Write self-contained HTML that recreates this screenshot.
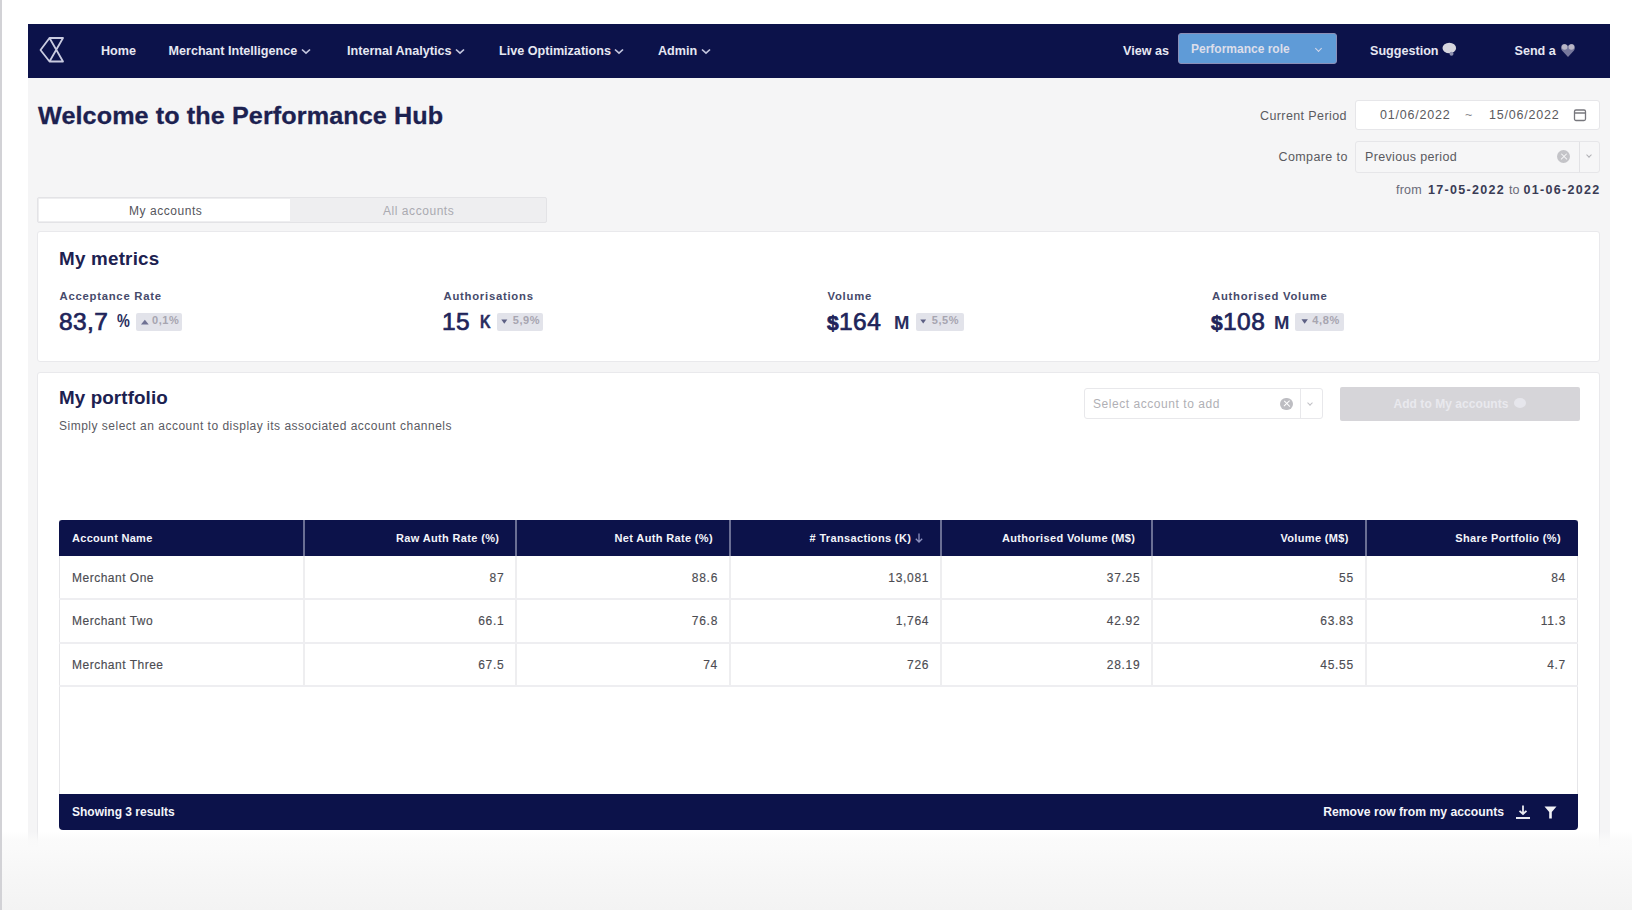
<!DOCTYPE html>
<html><head><meta charset="utf-8">
<style>
*{box-sizing:border-box;margin:0;padding:0}
html,body{width:1632px;height:910px;overflow:hidden;background:#fff;font-family:"Liberation Sans",sans-serif;position:relative}
.a{position:absolute;white-space:nowrap}
#strip{left:0;top:0;width:2px;height:910px;background:#d2d2d6}
#nav{left:28px;top:23.5px;width:1582px;height:54.5px;background:#0c124a}
#content{left:28px;top:78px;width:1582px;height:769px;background:#f5f5f6}
#fade{left:2px;top:831px;width:1630px;height:79px;background:linear-gradient(to bottom,rgba(250,250,250,0) 0px,rgba(250,250,250,0.9) 10px,#fafafa 17px,#f6f6f6 50px,#f3f3f3 79px)}
.nv{color:#e6e7f2;font-weight:bold;font-size:12.6px;top:44px}
.chev{display:inline-block;width:10px;height:7px;margin-left:3.5px;vertical-align:0px}
.card{background:#fff;border:1px solid #e9e9ec;border-radius:3px}
.lbl{color:#464a6b;font-weight:bold;font-size:11.3px;letter-spacing:0.75px}
.num{color:#20245a;font-size:24.5px;letter-spacing:0.4px;-webkit-text-stroke:0.7px #20245a}
.unit{color:#2a2e5e;font-weight:bold}
.badge{background:#e2e3ea;border-radius:2px;height:18px}
.bt{color:#a7a5b0;font-size:11px;font-weight:bold;letter-spacing:0.6px;top:314px}
.th{color:#f4f5fa;font-weight:bold;font-size:11px;top:532px}
.td{color:#4c4c52;font-size:12px;-webkit-text-stroke:0.15px #4c4c52}
</style></head><body><div id="root" style="position:absolute;left:0;top:0;width:1632px;height:910px">
<div id="strip" class="a"></div>
<div id="nav" class="a"></div>
<div id="content" class="a"></div>

<!-- logo -->
<svg class="a" style="left:38px;top:34px" width="30" height="32" viewBox="0 0 30 32">
<path d="M11.5 4 L25 4 L11.5 27.5 L25 27.5 Z M11.5 4 L2.5 16 L11.5 27.5" fill="none" stroke="#c9cbe0" stroke-width="1.8" stroke-linejoin="round"/>
</svg>

<div class="a nv" style="left:101px">Home</div>
<div class="a nv" style="left:168.5px">Merchant Intelligence<svg class="chev" width="10" height="7" viewBox="0 0 10 7"><path d="M1 1.5 L5 5.2 L9 1.5" fill="none" stroke="#c3c6de" stroke-width="1.7"/></svg></div>
<div class="a nv" style="left:347px">Internal Analytics<svg class="chev" width="10" height="7" viewBox="0 0 10 7"><path d="M1 1.5 L5 5.2 L9 1.5" fill="none" stroke="#c3c6de" stroke-width="1.7"/></svg></div>
<div class="a nv" style="left:499px">Live Optimizations<svg class="chev" width="10" height="7" viewBox="0 0 10 7"><path d="M1 1.5 L5 5.2 L9 1.5" fill="none" stroke="#c3c6de" stroke-width="1.7"/></svg></div>
<div class="a nv" style="left:658px">Admin<svg class="chev" width="10" height="7" viewBox="0 0 10 7"><path d="M1 1.5 L5 5.2 L9 1.5" fill="none" stroke="#c3c6de" stroke-width="1.7"/></svg></div>

<div class="a nv" style="left:1123px">View as</div>
<div class="a" style="left:1178px;top:33px;width:159px;height:31px;background:#5f9bd7;border:1px solid #8a8fb8;border-radius:3px"></div>
<div class="a" style="left:1191px;top:41.5px;color:#dcdeea;font-size:12px;font-weight:bold;letter-spacing:0px">Performance role</div>
<div class="a" style="left:1316px;top:46px;width:5px;height:5px;border-right:1px solid #d5d8ea;border-bottom:1px solid #d5d8ea;transform:rotate(45deg)"></div>
<div class="a nv" style="left:1370px">Suggestion</div>
<div class="a nv" style="left:1514.5px">Send a</div>


<svg class="a" style="left:1440px;top:41px" width="18" height="17" viewBox="0 0 18 17"><ellipse cx="9.3" cy="7" rx="6.8" ry="5.2" fill="#d6d6de"/><ellipse cx="11.5" cy="12.8" rx="2" ry="2" fill="#8e90b0"/></svg>
<svg class="a" style="left:1560px;top:41.5px" width="16" height="16" viewBox="0 0 16 16"><path d="M8 15 L2 8.5 C0.2 6.3 1 2 4.3 2 C6 2 7.2 3 8 4.2 C8.8 3 10 2 11.7 2 C15 2 15.8 6.3 14 8.5 Z" fill="#77789c"/><circle cx="4.6" cy="5" r="2.8" fill="#b9b6c6"/><circle cx="11.4" cy="5" r="2.8" fill="#b9b6c6"/></svg>
<!-- header -->
<div class="a" style="left:38px;top:102px;color:#1c2150;font-size:24px;font-weight:bold;letter-spacing:0.1px;transform:scaleX(1.048);transform-origin:left;-webkit-text-stroke:0.3px #1c2150">Welcome to the Performance Hub</div>

<div class="a" style="left:1260px;top:109px;color:#5a5a60;font-size:12.5px;letter-spacing:0.4px">Current Period</div>
<div class="a" style="left:1355px;top:100px;width:245px;height:30px;background:#fff;border:1px solid #e6e6e9;border-radius:3px"></div>
<div class="a" style="left:1380px;top:108px;color:#5a5a60;font-size:12.5px;letter-spacing:0.8px">01/06/2022</div>
<div class="a" style="left:1465px;top:108px;color:#8a8a90;font-size:12.5px">~</div>
<div class="a" style="left:1489px;top:108px;color:#5a5a60;font-size:12.5px;letter-spacing:0.8px">15/06/2022</div>
<svg class="a" style="left:1573px;top:108px" width="14" height="14" viewBox="0 0 14 14"><rect x="1.5" y="2" width="11" height="10.5" rx="1.5" fill="none" stroke="#77777d" stroke-width="1.3"/><line x1="1.5" y1="5" x2="12.5" y2="5" stroke="#77777d" stroke-width="1.5"/></svg>

<div class="a" style="left:1278.5px;top:150px;color:#5a5a60;font-size:12.5px;letter-spacing:0.4px">Compare to</div>
<div class="a" style="left:1355px;top:141px;width:245px;height:32px;background:#f6f6f7;border:1px solid #e6e6e9;border-radius:3px"></div>
<div class="a" style="left:1579px;top:142px;width:1px;height:30px;background:#e2e2e5"></div>
<div class="a" style="left:1365px;top:150px;color:#5a5a60;font-size:12.5px;letter-spacing:0.35px">Previous period</div>
<div class="a" style="left:1557px;top:150px;width:13px;height:13px;border-radius:50%;background:#c4c4c8"></div>
<div class="a" style="left:1559.5px;top:155.8px;width:8px;height:1.4px;background:#f6f6f7;transform:rotate(45deg)"></div>
<div class="a" style="left:1559.5px;top:155.8px;width:8px;height:1.4px;background:#f6f6f7;transform:rotate(-45deg)"></div>
<div class="a" style="left:1587px;top:153px;width:4px;height:4px;border-right:1px solid #b0b0b5;border-bottom:1px solid #b0b0b5;transform:rotate(45deg)"></div>

<div class="a" style="left:1396px;top:182.5px;color:#6a6a78;font-size:12.5px;letter-spacing:0.2px">from</div>
<div class="a" style="left:1428px;top:182.5px;color:#3a3c55;font-size:12.5px;font-weight:bold;letter-spacing:1.3px">17-05-2022</div>
<div class="a" style="left:1509px;top:182.5px;color:#6a6a78;font-size:12.5px">to</div>
<div class="a" style="left:1523.5px;top:182.5px;color:#3a3c55;font-size:12.5px;font-weight:bold;letter-spacing:1.3px">01-06-2022</div>

<!-- tabs -->
<div class="a" style="left:37px;top:197px;width:510px;height:26px;background:#eeeef0;border:1px solid #e3e3e6;border-radius:2px"></div>
<div class="a" style="left:39px;top:199px;width:251px;height:22px;background:#fff"></div>
<div class="a" style="left:129px;top:203.5px;color:#55555c;font-size:12px;letter-spacing:0.55px">My accounts</div>
<div class="a" style="left:383px;top:203.5px;color:#aaaab0;font-size:12px;letter-spacing:0.55px">All accounts</div>

<!-- metrics card -->
<div class="a card" style="left:37px;top:231px;width:1563px;height:131px"></div>
<div class="a" style="left:59px;top:248.5px;color:#1c2150;font-size:17.5px;font-weight:bold;letter-spacing:0.2px;transform:scaleX(1.075);transform-origin:left">My metrics</div>

<div class="a lbl" style="left:59.5px;top:290px">Acceptance Rate</div>
<div class="a num" style="left:59px;top:307.5px">83,7</div>
<div class="a unit" style="left:116.5px;top:310.5px;font-size:18px;transform:scaleX(0.8);transform-origin:left">%</div>

<div class="a lbl" style="left:443.5px;top:290px">Authorisations</div>
<div class="a num" style="left:442px;top:307.5px">15</div>
<div class="a unit" style="left:479.5px;top:312px;font-size:18px;transform:scaleX(0.82);transform-origin:left;-webkit-text-stroke:0.4px #2a2e5e">K</div>

<div class="a lbl" style="left:827.5px;top:290px">Volume</div>
<div class="a num" style="left:827px;top:307.5px"><span style="font-size:21px;font-weight:bold">$</span>164</div>
<div class="a unit" style="left:894px;top:311.5px;font-size:18.5px">M</div>

<div class="a lbl" style="left:1212px;top:290px">Authorised Volume</div>
<div class="a num" style="left:1211px;top:307.5px"><span style="font-size:21px;font-weight:bold">$</span>108</div>
<div class="a unit" style="left:1274px;top:311.5px;font-size:18.5px">M</div>

<div class="a badge" style="left:135.5px;top:313px;width:46.9px"></div>
<svg class="a" style="left:139.6px;top:318.5px" width="9.7" height="6" viewBox="0 0 10 6"><path d="M1 5.5 L5 0.8 L9 5.5 Z" fill="#6f7294"/></svg>
<div class="a bt" style="left:152px">0,1%</div>
<div class="a badge" style="left:497px;top:313px;width:45.6px"></div>
<svg class="a" style="left:501.4px;top:318.8px" width="6.6" height="5" viewBox="0 0 7 5"><path d="M0.3 0.3 L6.7 0.3 L3.5 4.8 Z" fill="#5d6084"/></svg>
<div class="a bt" style="left:512.7px">5,9%</div>
<div class="a badge" style="left:915.5px;top:313px;width:48.5px"></div>
<svg class="a" style="left:920.4px;top:318.8px" width="6.4" height="5" viewBox="0 0 7 5"><path d="M0.3 0.3 L6.7 0.3 L3.5 4.8 Z" fill="#5d6084"/></svg>
<div class="a bt" style="left:931.7px">5,5%</div>
<div class="a badge" style="left:1295px;top:313px;width:49.0px"></div>
<svg class="a" style="left:1300.5px;top:318.8px" width="7.3" height="5" viewBox="0 0 7 5"><path d="M0.3 0.3 L6.7 0.3 L3.5 4.8 Z" fill="#5d6084"/></svg>
<div class="a bt" style="left:1312.3px">4,8%</div>
<!-- portfolio card -->
<div class="a card" style="left:37px;top:372px;width:1563px;height:500px"></div>
<div class="a" style="left:59px;top:387.5px;color:#1c2150;font-size:18px;font-weight:bold;letter-spacing:0.1px;transform:scaleX(1.045);transform-origin:left">My portfolio</div>
<div class="a" style="left:59px;top:419px;color:#5a5a62;font-size:12px;letter-spacing:0.5px">Simply select an account to display its associated account channels</div>

<div class="a" style="left:1084px;top:388px;width:239px;height:31px;background:#fff;border:1px solid #e8e8eb;border-radius:3px"></div>
<div class="a" style="left:1300px;top:389px;width:1px;height:29px;background:#e8e8eb"></div>
<div class="a" style="left:1093px;top:397px;color:#b0b0b5;font-size:12px;letter-spacing:0.55px">Select account to add</div>
<div class="a" style="left:1280px;top:397.5px;width:12.5px;height:12.5px;border-radius:50%;background:#bdbdc2"></div>
<div class="a" style="left:1282.5px;top:403px;width:7.5px;height:1.4px;background:#fff;transform:rotate(45deg)"></div>
<div class="a" style="left:1282.5px;top:403px;width:7.5px;height:1.4px;background:#fff;transform:rotate(-45deg)"></div>
<div class="a" style="left:1308px;top:401px;width:4px;height:4px;border-right:1px solid #c0c0c5;border-bottom:1px solid #c0c0c5;transform:rotate(45deg)"></div>

<div class="a" style="left:1340px;top:387px;width:240px;height:34px;background:#d6d5d9;border-radius:2px"></div>
<div class="a" style="left:1393.5px;top:397px;color:#e9e9ee;font-size:12px;font-weight:bold;letter-spacing:0.05px">Add to My accounts</div>
<div class="a" style="left:1514px;top:398px;width:12px;height:10px;border-radius:50%;background:#e6e6ec"></div>

<div class="a" style="left:59px;top:520px;width:1519px;height:290px;background:#fff;border-left:1.5px solid #e6e6e9;border-right:1.5px solid #e6e6e9"></div>
<div class="a" style="left:59px;top:520px;width:1519px;height:35.5px;background:#0c124a;border-radius:3px 3px 0 0"></div>
<div class="a" style="left:303.25px;top:555px;width:2px;height:131px;background:#eeeef0"></div>
<div class="a" style="left:303.25px;top:520px;width:2px;height:35.5px;background:#6a6e94"></div>
<div class="a" style="left:515.05px;top:555px;width:2px;height:131px;background:#eeeef0"></div>
<div class="a" style="left:515.05px;top:520px;width:2px;height:35.5px;background:#6a6e94"></div>
<div class="a" style="left:728.75px;top:555px;width:2px;height:131px;background:#eeeef0"></div>
<div class="a" style="left:728.75px;top:520px;width:2px;height:35.5px;background:#6a6e94"></div>
<div class="a" style="left:939.95px;top:555px;width:2px;height:131px;background:#eeeef0"></div>
<div class="a" style="left:939.95px;top:520px;width:2px;height:35.5px;background:#6a6e94"></div>
<div class="a" style="left:1151.05px;top:555px;width:2px;height:131px;background:#eeeef0"></div>
<div class="a" style="left:1151.05px;top:520px;width:2px;height:35.5px;background:#6a6e94"></div>
<div class="a" style="left:1364.55px;top:555px;width:2px;height:131px;background:#eeeef0"></div>
<div class="a" style="left:1364.55px;top:520px;width:2px;height:35.5px;background:#6a6e94"></div>
<div class="a" style="left:59px;top:597.95px;width:1519px;height:2.5px;background:#eeeef1"></div>
<div class="a" style="left:59px;top:641.55px;width:1519px;height:2.5px;background:#eeeef1"></div>
<div class="a" style="left:59px;top:684.65px;width:1519px;height:2.5px;background:#eeeef1"></div>
<div class="a th" style="left:72px;letter-spacing:0.3px">Account Name</div>
<div class="a th" style="right:1132.70px;letter-spacing:0.35px">Raw Auth Rate (%)</div>
<div class="a th" style="right:919.00px;letter-spacing:0.35px">Net Auth Rate (%)</div>
<div class="a th" style="right:707.80px;letter-spacing:0.35px"># Transactions (K)<span style="display:inline-block;width:13px"></span></div>
<div class="a th" style="right:496.70px;letter-spacing:0.35px">Authorised Volume (M$)</div>
<div class="a th" style="right:283.20px;letter-spacing:0.35px">Volume (M$)</div>
<div class="a th" style="right:71.00px;letter-spacing:0.35px">Share Portfolio (%)</div>
<svg class="a" style="left:914px;top:532px" width="10" height="12" viewBox="0 0 10 12"><path d="M5 1.5 V10 M1.8 6.8 L5 10 L8.2 6.8" fill="none" stroke="#8e93c0" stroke-width="1.3"/></svg>
<div class="a td" style="left:72px;top:570.5px;letter-spacing:0.5px">Merchant One</div>
<div class="a td" style="right:1127.70px;top:570.5px;letter-spacing:0.7px">87</div>
<div class="a td" style="right:914.00px;top:570.5px;letter-spacing:0.7px">88.6</div>
<div class="a td" style="right:702.80px;top:570.5px;letter-spacing:0.7px">13,081</div>
<div class="a td" style="right:491.70px;top:570.5px;letter-spacing:0.7px">37.25</div>
<div class="a td" style="right:278.20px;top:570.5px;letter-spacing:0.7px">55</div>
<div class="a td" style="right:66.00px;top:570.5px;letter-spacing:0.7px">84</div>
<div class="a td" style="left:72px;top:614px;letter-spacing:0.5px">Merchant Two</div>
<div class="a td" style="right:1127.70px;top:614px;letter-spacing:0.7px">66.1</div>
<div class="a td" style="right:914.00px;top:614px;letter-spacing:0.7px">76.8</div>
<div class="a td" style="right:702.80px;top:614px;letter-spacing:0.7px">1,764</div>
<div class="a td" style="right:491.70px;top:614px;letter-spacing:0.7px">42.92</div>
<div class="a td" style="right:278.20px;top:614px;letter-spacing:0.7px">63.83</div>
<div class="a td" style="right:66.00px;top:614px;letter-spacing:0.7px">11.3</div>
<div class="a td" style="left:72px;top:657.5px;letter-spacing:0.5px">Merchant Three</div>
<div class="a td" style="right:1127.70px;top:657.5px;letter-spacing:0.7px">67.5</div>
<div class="a td" style="right:914.00px;top:657.5px;letter-spacing:0.7px">74</div>
<div class="a td" style="right:702.80px;top:657.5px;letter-spacing:0.7px">726</div>
<div class="a td" style="right:491.70px;top:657.5px;letter-spacing:0.7px">28.19</div>
<div class="a td" style="right:278.20px;top:657.5px;letter-spacing:0.7px">45.55</div>
<div class="a td" style="right:66.00px;top:657.5px;letter-spacing:0.7px">4.7</div>
<div class="a" style="left:59px;top:794px;width:1519px;height:36px;background:#0c124a;border-radius:0 0 4px 4px"></div>
<div class="a" style="left:72px;top:805px;color:#f4f5fa;font-size:12px;font-weight:bold;letter-spacing:0px">Showing 3 results</div>
<div class="a" style="right:128px;top:805px;color:#f4f5fa;font-size:12.2px;font-weight:bold;letter-spacing:0px">Remove row from my accounts</div>
<svg class="a" style="left:1514px;top:804px" width="18" height="16" viewBox="0 0 18 16"><path d="M9 1.5 V10 M5.5 6.8 L9 10 L12.5 6.8" fill="none" stroke="#e8e9f0" stroke-width="1.8"/><rect x="2" y="13" width="14" height="2" fill="#e8e9f0"/></svg>
<svg class="a" style="left:1543px;top:805px" width="15" height="15" viewBox="0 0 15 15"><path d="M1.5 1.5 H13.5 L8.8 7 V13.5 H6.2 V7 Z" fill="#f2f2f6"/></svg>
<div id="fade" class="a"></div>
</div></body></html>
